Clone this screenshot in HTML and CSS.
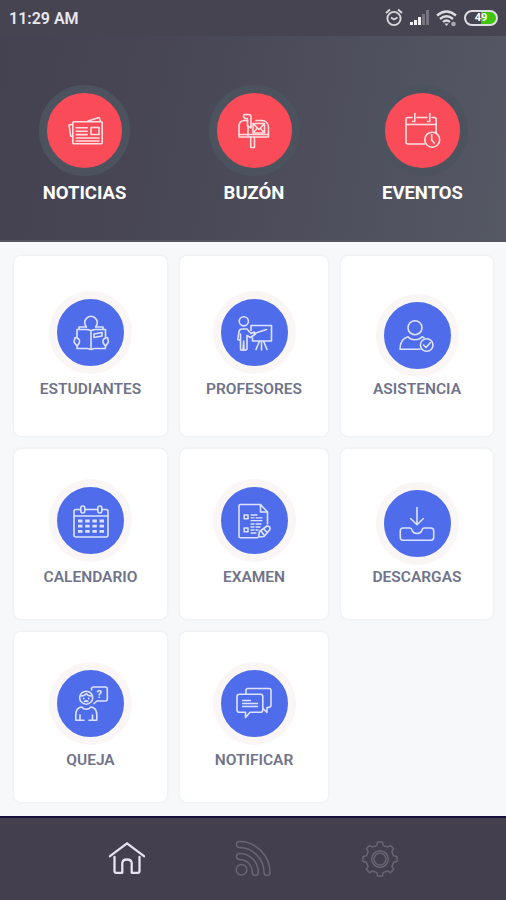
FILE: index.html
```
<!DOCTYPE html>
<html lang="es">
<head>
    <meta charset="UTF-8">
    <meta name="viewport" content="width=device-width, initial-scale=1.0">
    <title>Inicio</title>
    <link rel="stylesheet" href="styles.css">
</head>
<body>
    <div class="status-bar">
        <span class="time">11:29 AM</span>
        <div class="status-icons">
            <svg width="20" height="20" viewBox="0 0 20 20" fill="none" stroke="#d8d7dc" stroke-width="1.9">
                <circle cx="10" cy="10.5" r="6.6"/>
                <path d="M2 5l4-3.500M18 5l-4-3.500M7 9.500l3 2 3.500-2"/>
            </svg>
            <svg width="20" height="16" viewBox="0 0 20 16">
                <path d="M0 12h3v3H0zM4 10h3v5H4zM8 7h3v8H8z" fill="#f3f2f5"/>
                <path d="M12 4h3v11h-3zM16 0h3v15h-3z" fill="#77747f"/>
            </svg>
            <svg width="22" height="18" viewBox="0 0 22 18" fill="none" stroke="#dddce1" stroke-width="2.300">
                <path d="M1 6.500q9.500-8 19 0M4 10q6.500-5.500 13 0M7 13q3.500-3 7 0"/>
                <path d="M8.500 14.500h4L10.500 17z" fill="#dddce1" stroke="none"/>
                <circle cx="17.500" cy="15" r="2.300" fill="#aaa8b1" stroke="none"/>
            </svg>
            <div class="battery">49</div>
        </div>
    </div>

    <header class="top-menu">
        <a class="top-item">
            <span class="circle red">
                <svg class="icon" viewBox="0 0 40 40">
                    <rect x="7.800" y="10.700" width="29.400" height="22" rx="1"/>
                    <path d="M7.500 25.500l-1.800-.5L4 14l3.500-.700M23 10l11-3.500 1.500 3.500"/>
                    <path d="M11.200 16.800h11M11.200 20.200h11M11.200 23.600h11M11.200 27h22.800M11.200 30h22.800"/>
                    <rect x="26" y="16.500" width="8" height="7"/>
                </svg>
            </span>
            <span class="top-label">NOTICIAS</span>
        </a>
        <a class="top-item">
            <span class="circle red">
                <svg class="icon" viewBox="0 0 40 40">
                    <path d="M14 26H5V15.500C5 11.500 7.500 9.500 10.500 9.500h3M22 9.500h5.500c4.500 0 7 3 7 7V26H14V15"/>
                    <path d="M5 23.500h29.500M10 3.500h4.500c2 0 2.500 1 2.500 2.500v11l-3.500-2V7.500H11c-1.500-1-1.500-3-1-4z"/>
                    <path d="M19 12.500h11.500V22H19zM19 12.500l6 6 5.500-6M19 22l4-4.500M30.500 22l-4-4.500M16.700 26v10.500h3.800V26"/>
                </svg>
            </span>
            <span class="top-label">BUZÓN</span>
        </a>
        <a class="top-item">
            <span class="circle red">
                <svg class="icon" viewBox="0 0 40 40">
                    <path d="M9 6.500H5q-2 0-2 2V31q0 2 2 2h16.500M14 6.500h10M29 6.500h2.200q2 0 2 2v13M3 13.500h30"/>
                    <path d="M9.500 10.500h2.300v-8M24.500 10.500h2.300v-8"/>
                    <circle cx="29.200" cy="28.700" r="7.500"/>
                    <path d="M28.700 23.500v5.500l2.500 3"/>
                </svg>
            </span>
            <span class="top-label">EVENTOS</span>
        </a>
    </header>

    <main class="grid">
        <a class="card">
            <span class="circle blue">
                <svg class="icon" viewBox="0 0 40 40">
                    <path d="M15.200 13.700a6.300 6.300 0 1 1 9.600 0"/>
                    <path d="M6 25V16.500h10l4 1 4-1h10.500V25M6 32.500v3h10.500l3.500 1 3.500-1h11v-3M20 17.500v19M8 16v-2h7.500M32 16v-2h-7.500"/>
                    <path d="M4 24.500c3 0 5 2 4.500 4.500S6 33 5.500 32.500L3 29zM36.500 24.500c-3 0-5 2-4.500 4.500s2.500 4 3 3.500l2.500-3.500z"/>
                    <path d="M23 21l8-1.500v3.500l-8 1.500z"/>
                </svg>
            </span>
            <span class="card-label">ESTUDIANTES</span>
        </a>
        <a class="card">
            <span class="circle blue">
                <svg class="icon" viewBox="0 0 40 40">
                    <circle cx="9.800" cy="8.300" r="4.600"/>
                    <path d="M6.500 27.500l-2.700-1 1.200-8q.5-2.500 3-2.500h5l4 4.500 3-1.500 1.500 2-5 3.500-3.500-2V36q-.5 1.500-3 1L9.700 28 9 37q-2.500.5-2.500-1V21"/>
                    <path d="M17 17.500v-5h20.500V28H18.500v-3M20 20.500l12.500-4M27.500 28v9M25.500 28L22 36.500M29.500 28l3.500 8.500"/>
                </svg>
            </span>
            <span class="card-label">PROFESORES</span>
        </a>
        <a class="card low">
            <span class="circle blue">
                <svg class="icon" viewBox="0 0 40 40">
                    <circle cx="18" cy="11.700" r="7"/>
                    <path d="M23 33.300H3c0-6 2-11 8-12.500 3 4 11 4 14 0l2 1"/>
                    <circle cx="29.700" cy="29" r="6.300"/>
                    <path d="M26.500 29l2.500 2.500 4.500-5"/>
                </svg>
            </span>
            <span class="card-label">ASISTENCIA</span>
        </a>
        <a class="card">
            <span class="circle blue">
                <svg class="icon" viewBox="0 0 40 40">
                    <path d="M9.500 8.500H5q-2 0-2 2V34q0 2 2 2h30q2 0 2-2V10.500q0-2-2-2h-4M14 8.500h12.500M3 15h34"/>
                    <rect x="9.800" y="5" width="4" height="7" rx="2"/>
                    <rect x="26.800" y="5" width="4" height="7" rx="2"/>
                    <path class="dots" d="M7 20h26M7 25.200h26M7 30.400h26"/>
                </svg>
            </span>
            <span class="card-label">CALENDARIO</span>
        </a>
        <a class="card">
            <span class="circle blue">
                <svg class="icon" viewBox="0 0 40 40">
                    <path d="M23.500 36.800H6.500q-1.500 0-1.500-1.500V5q0-1.500 1.500-1.500h20l7 7.500v12M26.500 3.500V11h7"/>
                    <rect x="10.200" y="14" width="3.800" height="3.800"/>
                    <rect x="10.200" y="27" width="3.800" height="3.800"/>
                    <path d="M17 14h6M17 16.800h3M22 16.800h6M17 19.600h11M17 23h3M22 23h5M17 26h3M22 26h4M17 29h3M22 29h2M17 32h5" stroke-width="1.300"/>
                    <path d="M24.500 36l1-5.500 7.500-5.500q3.500 0 3 3.500l-6 7zM27 30l3 4M30 28l3 3.500"/>
                </svg>
            </span>
            <span class="card-label">EXAMEN</span>
        </a>
        <a class="card low">
            <span class="circle blue">
                <svg class="icon" viewBox="0 0 40 40">
                    <path d="M20 3.500v17M13.800 14.700l6.200 6 6.200-6"/>
                    <path d="M6 24h7q1.500 0 2.200 2.500 1 3 4.800 3t4.800-3Q25.500 24 27 24h7q2.700 0 2.700 3v6.300q0 3-2.700 3H6q-2.700 0-2.700-3V27q0-3 2.700-3z"/>
                </svg>
            </span>
            <span class="card-label">DESCARGAS</span>
        </a>
        <a class="card">
            <span class="circle blue">
                <svg class="icon" viewBox="0 0 40 40">
                    <circle cx="15.200" cy="13.700" r="6.500"/>
                    <path d="M10 12q4 0 5.200-2.500 1.300 2.500 5.200 2.500M12.700 14.200v.6M17.700 14.200v.6M13.500 17.500q1.700-1.300 3.400 0"/>
                    <path d="M13 36.300H4.800V31c0-5 2-7.500 6-8 2 3 7 3 9 0 4 .5 6 3 6 8v5.300H18M9 31v5M21.500 31v5"/>
                    <path d="M20.500 6V5q0-2 2-2h11.800q2 0 2 2v10q0 2-2 2H26l-3 2.500"/>
                    <text class="mark" x="28.300" y="14">?</text>
                </svg>
            </span>
            <span class="card-label">QUEJA</span>
        </a>
        <a class="card">
            <span class="circle blue">
                <svg class="icon" viewBox="0 0 40 40">
                    <path d="M5.500 10.300h21q2.300 0 2.300 2.300V26q0 2.300-2.300 2.300H16l-4.500 5.200v-5.200h-6Q3 28.300 3 26V12.600q0-2.300 2.500-2.300z"/>
                    <path d="M12 10V6.500q0-2 2-2h21q2 0 2 2V21q0 2.500-3 2.500h-1v5l-4-4"/>
                    <path d="M8.500 16.500h8M8.500 19.500h15M8.500 22.500h15" stroke-width="1.300"/>
                </svg>
            </span>
            <span class="card-label">NOTIFICAR</span>
        </a>
    </main>

    <nav class="bottom-nav">
        <a class="nav-item active">
            <svg class="icon" viewBox="0 0 40 40">
                <path d="M3 17.200L20 4.300l17 12.900"/>
                <path d="M7.500 18v14q0 1.800 1.800 1.800h6V24.500q0-4 4.700-4t4.700 4v9.300h6q1.800 0 1.800-1.800V18"/>
            </svg>
        </a>
        <a class="nav-item">
            <svg class="icon" viewBox="0 0 40 40">
                <path class="band" d="M6.500 5.500c15 0 27.500 13 27.500 28M6.500 17.500c9 0 15.800 7 15.800 16"/>
                <path class="band-inner" d="M6.500 5.500c15 0 27.500 13 27.500 28M6.500 17.500c9 0 15.800 7 15.800 16"/>
                <circle cx="8.500" cy="30.700" r="5.300"/>
            </svg>
        </a>
        <a class="nav-item">
            <svg class="icon" viewBox="0 0 40 40">
                <path d="M16.800 6.400l.8-3.400h4.800l.8 3.400 4.200 1.700 2.900-1.800 3.400 3.400-1.800 2.900 1.700 4.200 3.400.8v4.800l-3.400.8-1.700 4.200 1.800 2.900-3.400 3.400-2.900-1.800-4.200 1.700-.8 3.400h-4.800l-.8-3.400-4.200-1.700-2.900 1.800-3.400-3.400 1.800-2.900-1.700-4.200-3.400-.8v-4.800l3.400-.8 1.700-4.200-1.800-2.900 3.400-3.400 2.900 1.800z"/>
                <circle cx="20" cy="20" r="8.300"/>
                <circle cx="20" cy="20" r="6"/>
            </svg>
        </a>
    </nav>
</body>
</html>
```
FILE: styles.css
```
* {
    margin: 0;
    padding: 0;
    box-sizing: border-box;
}

body {
    font-family: Roboto, "Liberation Sans", sans-serif;
    background: #f6f8fa;
    width: 506px;
    height: 900px;
    display: flex;
    flex-direction: column;
    overflow: hidden;
}

.status-bar {
    height: 36px;
    flex: none;
    display: flex;
    align-items: center;
    justify-content: space-between;
    padding: 0 8px 0 9px;
    background: #474452;
}

.time {
    color: #e9e8ee;
    font-size: 16px;
    font-weight: 600;
    padding-top: 1px;
}

.status-icons {
    display: flex;
    align-items: center;
    gap: 6px;
}

.battery {
    width: 34px;
    height: 16px;
    border: 2px solid #dedde2;
    border-radius: 8px;
    background: linear-gradient(90deg, #474452 50%, #3fc60c 50%);
    color: #fff;
    font-size: 11px;
    font-weight: 700;
    line-height: 12px;
    text-align: center;
}

.top-menu {
    height: 206px;
    flex: none;
    display: grid;
    grid-template-columns: 169px 170px 167px;
    padding-top: 49px;
    background: linear-gradient(100deg, #444150 0%, #4a4958 45%, #555964 100%);
    border-bottom: 2px solid #54535f;
}

.top-item,
.card {
    display: flex;
    flex-direction: column;
    align-items: center;
}

.top-label {
    margin-top: 6px;
    color: #fff;
    font-size: 18.500px;
    font-weight: 700;
    line-height: 22px;
}

.circle {
    display: flex;
    align-items: center;
    justify-content: center;
    border-radius: 50%;
}

.circle.red {
    width: 91px;
    height: 91px;
    background: #fa4c58;
    border: 8px solid #4d525f;
}

.circle.blue {
    width: 83px;
    height: 83px;
    background: #4f6ceb;
    border: 8px solid #faf6f6;
}

.icon {
    width: 40px;
    height: 40px;
    fill: none;
    stroke: #dde3ff;
    stroke-width: 1.600;
    stroke-linecap: round;
    stroke-linejoin: round;
}

.red .icon {
    stroke: #ffe0e2;
}

.icon .dots {
    stroke-width: 2.800;
    stroke-linecap: butt;
    stroke-dasharray: 4.500 2.670;
}

.mark {
    fill: #e3e8ff;
    stroke: none;
    font-size: 11px;
    font-weight: 700;
    text-anchor: middle;
}

.grid {
    flex: 1;
    display: grid;
    grid-template-columns: 153px 148px 152px;
    grid-template-rows: 180px 170px 170px;
    gap: 13px;
    padding: 14px 0 0 14px;
}

.card {
    padding-top: 30px;
    background: #fff;
    border-radius: 7px;
    box-shadow: 0 0 0 1.500px #f0f2f3;
}

.card:nth-child(-n+3) {
    padding-top: 35px;
}

.card-label {
    margin-top: 5px;
    color: #70738a;
    font-size: 15.500px;
    font-weight: 600;
    line-height: 20px;
}

.card.low .circle {
    margin-top: 3px;
}

.card.low .card-label {
    margin-top: 2px;
}

.bottom-nav {
    height: 84px;
    flex: none;
    display: flex;
    justify-content: center;
    gap: 86.500px;
    padding-top: 21px;
    background: #443f4f;
    border-top: 2px solid #15113a;
}

.nav-item {
    height: 40px;
}

.nav-item .icon {
    stroke: #696671;
    stroke-width: 1.500;
}

.nav-item.active .icon {
    stroke: #e6e3f0;
    stroke-width: 2.300;
}

.nav-item .icon .band {
    stroke-width: 7.500;
}

.nav-item .icon .band-inner {
    stroke: #443f4f;
    stroke-width: 4.500;
}
```
